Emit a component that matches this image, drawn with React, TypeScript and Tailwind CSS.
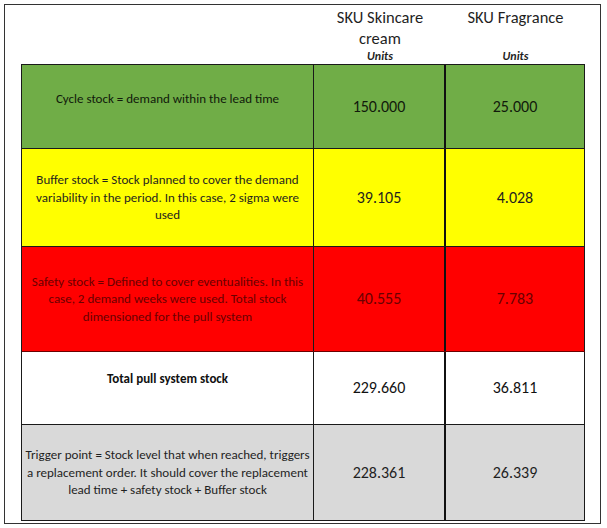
const rows = [
  {
    bg: 'bg-[#70ad47]',
    text: 'text-[#111a0b]',
    h: 'h-[84px]',
    border: 'border-b border-[#1a1a1a]',
    labelPad: 'pb-[16px]',
    lines: ['Cycle stock = demand within the lead time'],
    a: '150.000',
    b: '25.000',
  },
  {
    bg: 'bg-[#ffff00]',
    text: 'text-[#1f1f1f]',
    h: 'h-[98px]',
    border: 'border-b border-[#1a1a1a]',
    labelPad: '',
    lines: ['Buffer stock = Stock planned to cover the demand', 'variability in the period. In this case, 2 sigma were', 'used'],
    a: '39.105',
    b: '4.028',
  },
  {
    bg: 'bg-[#ff0000]',
    text: 'text-[#6a0000]',
    h: 'h-[105px]',
    border: 'border-b border-[#6b0000]',
    labelPad: '',
    lines: ['Safety stock = Defined to cover eventualities. In this', 'case, 2 demand weeks were used. Total stock', 'dimensioned for the pull system'],
    a: '40.555',
    b: '7.783',
  },
  {
    bg: 'bg-white',
    text: 'text-[#111]',
    h: 'h-[73px]',
    border: 'border-b border-[#1a1a1a]',
    labelPad: 'pb-[18px] font-bold',
    lines: ['Total pull system stock'],
    a: '229.660',
    b: '36.811',
  },
  {
    bg: 'bg-[#d9d9d9]',
    text: 'text-[#1f1f1f]',
    h: 'h-[96px]',
    border: 'border-b border-[#1a1a1a]',
    labelPad: '',
    lines: ['Trigger point = Stock level that when reached, triggers', 'a replacement order. It should cover the replacement', 'lead time + safety stock + Buffer stock'],
    a: '228.361',
    b: '26.339',
  },
];

export default function App() {
  return (
    <div className="w-[607px] h-[528px] bg-white pt-[4px] pl-[4px] font-['Carlito','Lato',sans-serif]">
      <div className="w-[597px] h-[520px] border border-[#333] pl-[16px]">
        {/* header */}
        <div className="grid grid-cols-[293px_132px_139px] h-[59px] text-[#1f1f1f]">
          <div />
          <div className="flex flex-col items-center pt-[2px]">
            <div className="text-[16.5px] leading-[21px]">SKU Skincare</div>
            <div className="text-[16.5px] leading-[21px]">cream</div>
            <div className="text-[12px] leading-[14px] font-bold italic">Units</div>
          </div>
          <div className="flex flex-col items-center pt-[2px]">
            <div className="text-[16.5px] leading-[21px]">SKU Fragrance</div>
            <div className="text-[16.5px] leading-[21px]">&nbsp;</div>
            <div className="text-[12px] leading-[14px] font-bold italic">Units</div>
          </div>
        </div>
        {/* body */}
        <div className="w-[564px] border-l border-t border-[#1a1a1a]">
          {rows.map((r, i) => (
            <div key={i} className={`grid grid-cols-[292px_132px_139px] ${r.h} ${r.bg} ${r.text} ${r.border}`}>
              <div className={`flex flex-col items-center justify-center text-center text-[13px] leading-[17.5px] border-r border-[#1a1a1a] ${r.labelPad}`}>
                {r.lines.map((l, j) => (
                  <div key={j} className="whitespace-nowrap">{l}</div>
                ))}
              </div>
              <div className="flex items-center justify-center text-[16px] border-r-2 border-[#111]">{r.a}</div>
              <div className="flex items-center justify-center text-[16px] border-r border-[#1a1a1a]">{r.b}</div>
            </div>
          ))}
        </div>
      </div>
    </div>
  );
}
